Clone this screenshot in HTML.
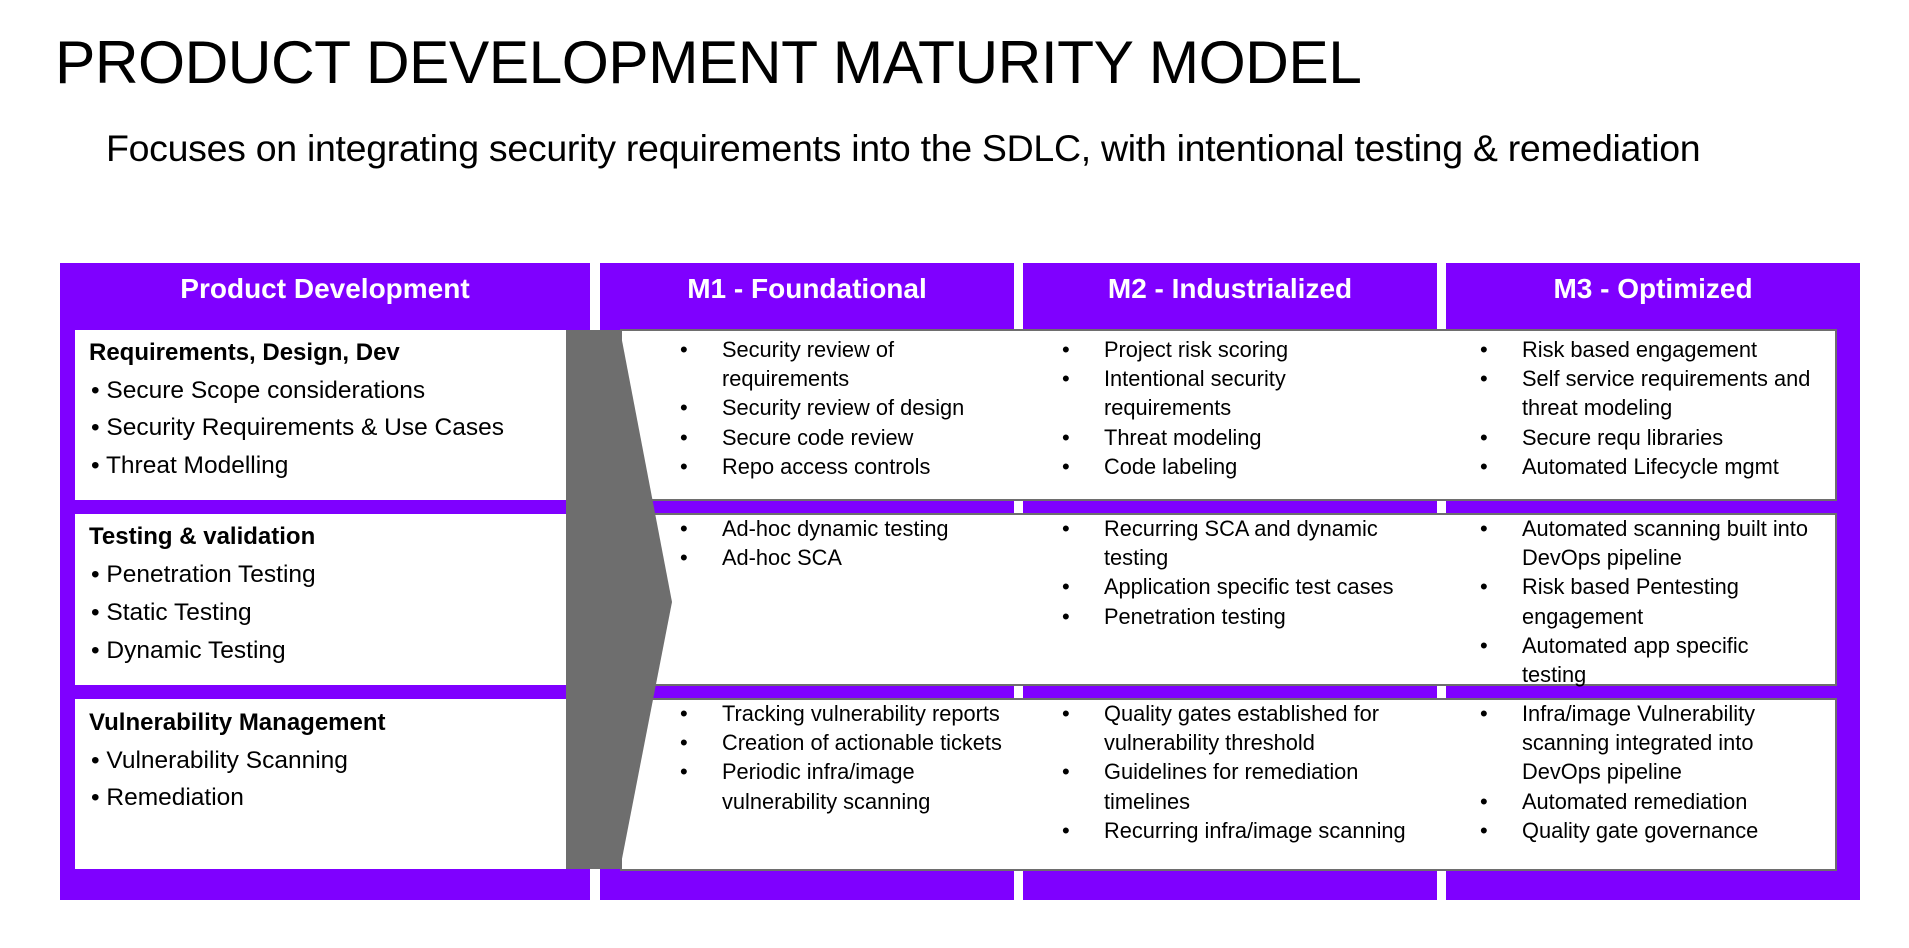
<!DOCTYPE html>
<html><head><meta charset="utf-8"><style>
body{margin:0;width:1909px;height:948px;background:#fff;position:relative;overflow:hidden;font-family:"Liberation Sans",sans-serif;color:#000}
.a{position:absolute}
.title{left:55px;top:27px;font-size:60.5px;white-space:nowrap;letter-spacing:-0.5px}
.sub{left:106px;top:127px;font-size:37.5px;white-space:nowrap;letter-spacing:-0.3px}
.p{background:#7f00ff}
.hd{color:#fff;font-weight:bold;font-size:28px;text-align:center;line-height:52px;top:263px}
.wl{background:#fff;left:75px;width:491px}
.wr{background:#fff;left:620px;width:1213px;border:2px solid #6e6e6e}
.lh{font-weight:bold;font-size:24px;left:89px;white-space:nowrap;line-height:30px;margin-top:-15px}
.li{font-size:24.5px;left:91px;white-space:nowrap;line-height:30px;margin-top:-15px}
.t{font-size:21.8px;line-height:29.2px;white-space:nowrap}
.t div{position:relative;padding-left:42px}
.t div b{position:absolute;left:0;font-weight:normal;font-size:22px}
</style></head><body>
<div class="a title">PRODUCT DEVELOPMENT MATURITY MODEL</div>
<div class="a sub">Focuses on integrating security requirements into the SDLC, with intentional testing &amp; remediation</div>

<div class="a p" style="left:60px;top:263px;width:530px;height:637px"></div>
<div class="a p" style="left:600px;top:263px;width:414px;height:637px"></div>
<div class="a p" style="left:1023px;top:263px;width:414px;height:637px"></div>
<div class="a p" style="left:1446px;top:263px;width:414px;height:637px"></div>

<div class="a hd" style="left:60px;width:530px">Product Development</div>
<div class="a hd" style="left:600px;width:414px">M1 - Foundational</div>
<div class="a hd" style="left:1023px;width:414px">M2 - Industrialized</div>
<div class="a hd" style="left:1446px;width:414px">M3 - Optimized</div>

<div class="a wl" style="top:330px;height:170px"></div>
<div class="a wl" style="top:514px;height:171px"></div>
<div class="a wl" style="top:699px;height:170px"></div>

<div class="a wr" style="top:329px;height:168px"></div>
<div class="a wr" style="top:513px;height:169px"></div>
<div class="a wr" style="top:698px;height:169px"></div>

<svg class="a" style="left:0;top:0" width="1909" height="948"><polygon points="566,330 620,330 672,602 620,869 566,869" fill="#6e6e6e"/></svg>

<div class="a lh" style="top:353px">Requirements, Design, Dev</div>
<div class="a li" style="top:391px">• Secure Scope considerations</div>
<div class="a li" style="top:428px">• Security Requirements &amp; Use Cases</div>
<div class="a li" style="top:466px">• Threat Modelling</div>

<div class="a lh" style="top:537px">Testing &amp; validation</div>
<div class="a li" style="top:575px">• Penetration Testing</div>
<div class="a li" style="top:613px">• Static Testing</div>
<div class="a li" style="top:651px">• Dynamic Testing</div>

<div class="a lh" style="top:723px">Vulnerability Management</div>
<div class="a li" style="top:761px">• Vulnerability Scanning</div>
<div class="a li" style="top:798px">• Remediation</div>

<div class="a t" style="left:680px;top:335px"><div><b>•</b>Security review of<br>requirements</div><div><b>•</b>Security review of design</div><div><b>•</b>Secure code review</div><div><b>•</b>Repo access controls</div></div>
<div class="a t" style="left:1062px;top:335px"><div><b>•</b>Project risk scoring</div><div><b>•</b>Intentional security<br>requirements</div><div><b>•</b>Threat modeling</div><div><b>•</b>Code labeling</div></div>
<div class="a t" style="left:1480px;top:335px"><div><b>•</b>Risk based engagement</div><div><b>•</b>Self service requirements and<br>threat modeling</div><div><b>•</b>Secure requ libraries</div><div><b>•</b>Automated Lifecycle mgmt</div></div>

<div class="a t" style="left:680px;top:514px"><div><b>•</b>Ad-hoc dynamic testing</div><div><b>•</b>Ad-hoc SCA</div></div>
<div class="a t" style="left:1062px;top:514px"><div><b>•</b>Recurring SCA and dynamic<br>testing</div><div><b>•</b>Application specific test cases</div><div><b>•</b>Penetration testing</div></div>
<div class="a t" style="left:1480px;top:514px"><div><b>•</b>Automated scanning built into<br>DevOps pipeline</div><div><b>•</b>Risk based Pentesting<br>engagement</div><div><b>•</b>Automated app specific<br>testing</div></div>

<div class="a t" style="left:680px;top:699px"><div><b>•</b>Tracking vulnerability reports</div><div><b>•</b>Creation of actionable tickets</div><div><b>•</b>Periodic infra/image<br>vulnerability scanning</div></div>
<div class="a t" style="left:1062px;top:699px"><div><b>•</b>Quality gates established for<br>vulnerability threshold</div><div><b>•</b>Guidelines for remediation<br>timelines</div><div><b>•</b>Recurring infra/image scanning</div></div>
<div class="a t" style="left:1480px;top:699px"><div><b>•</b>Infra/image Vulnerability<br>scanning integrated into<br>DevOps pipeline</div><div><b>•</b>Automated remediation</div><div><b>•</b>Quality gate governance</div></div>
</body></html>
